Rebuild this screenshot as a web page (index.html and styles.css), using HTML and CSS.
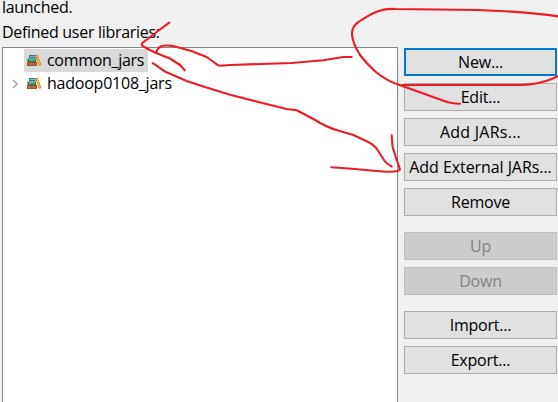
FILE: index.html
```html
<!DOCTYPE html>
<html lang="en">
<head>
<meta charset="utf-8">
<title>User Libraries</title>
<link rel="stylesheet" href="styles.css">
</head>
<body>
<svg class="defs" width="0" height="0" aria-hidden="true">
  <symbol id="books" viewBox="0 0 15 13">
    <path fill="#247a94" d="M2 1h6.500v3H2z"/><path fill="#79bdce" d="M3 2h5v1H3z"/>
    <path fill="#277956" d="M0.500 4.500H9V8H.5z"/><path fill="#9ccbae" d="M2 5.500h6v1H2z"/>
    <path fill="#98512b" d="M0 8h10v4H0z"/><path fill="#c98b57" d="M1 9.500h8v1H1z"/>
    <path fill="#d68a20" d="M8 1.200 10.500.5l4 10.500-2.500 1z"/><path fill="#ffc458" d="m9.300 2 .9-.2 3.200 8.700-.9.300z"/>
  </symbol>
</svg>
<main class="dialog">
  <p class="intro">launched.</p>
  <p class="label">Defined user libraries:</p>
  <div class="content">
    <ul class="list">
      <li class="row"><span class="toggle"></span><span class="item selected"><svg class="books"><use href="#books"/></svg><span class="name-a">common_jars</span></span></li>
      <li class="row"><span class="toggle"><svg width="7" height="10" viewBox="0 0 7 10"><path d="m1 1 4 4-4 4" fill="none" stroke="#a6a6a6" stroke-width="1.5"/></svg></span><span class="item"><svg class="books"><use href="#books"/></svg><span class="name-b">hadoop0108_jars</span></span></li>
    </ul>
    <div class="actions">
      <button class="default">New...</button>
      <button>Edit...</button>
      <button class="jars">Add JARs...</button>
      <button class="wide">Add External JARs...</button>
      <button>Remove</button>
      <button class="group" disabled>Up</button>
      <button disabled>Down</button>
      <button class="group">Import...</button>
      <button>Export...</button>
    </div>
  </div>
</main>
<svg class="ink" viewBox="0 0 558 402" aria-hidden="true">
  <path d="M169.3 22.7 160 29.5 143 42.5Q140.500 44.500 143 46.200L147 48.500 156 53 170 58.500 180 65 184.700 70.300"/>
  <path d="M156.300 52.700Q157.500 46.500 163.300 45.700 170 45.200 175 46.500L192 51.300 206.700 57 215 63Q218 65.800 220 65.700L230 65 291.700 63 323.300 60.300 343.300 57H351.700"/>
  <path d="M152.700 63.300C157 65 160 69 166 72L186.700 81 201.700 86 230 94.700 263.300 103.300 286.700 109 296.700 110.300 313.300 119Q326 127 338 130.500L353.300 135 366.700 141.300Q374 145 376.700 148.700L384.300 160.500Q386.500 164 391.700 166.500"/>
  <path d="M391.700 135.300 392.500 146.500Q394 152 400 169.500L398 171Q391 172.500 380 171.200L351.700 168.700 331.300 167.300"/>
  <path d="M559 16.500Q530 11.700 478 10L395 9Q386 8.500 378 11.200 370 14 358.500 22 352 26 352 34 352 42 360 55 366 63 375 71.200 387 81.500 401.700 85.700L445 101.300Q451 103.700 460 103.700"/>
  <path d="M401.700 85H521.700Q538 84.500 551.700 79L559 75.700"/>
</svg>
</body>
</html>
```

FILE: styles.css
```css
* { box-sizing: border-box; }
body {
  margin: 0;
  height: 402px;
  overflow: hidden;
  background: #f0f0f0;
  color: #000;
  font: 16px/23px "Open Sans", "Noto Sans", sans-serif;
}
.defs { display: none; }
.dialog { height: 402px; padding-left: 2px; overflow: hidden; }
p { margin: 0; white-space: nowrap; }
.intro { height: 21px; line-height: 15px; letter-spacing: -.3px; }
.label { height: 26px; line-height: 23px; letter-spacing: -.3px; }
.content { display: flex; height: 356px; gap: 6px; }
.list {
  width: 396px;
  height: 100%;
  margin: 0;
  padding: 1px 0 0;
  border: 1px solid #828790;
  border-bottom: 0;
  background: #fff;
  list-style: none;
}
.row { display: flex; height: 23px; }
.toggle { display: flex; width: 21px; align-items: center; padding-left: 9px; }
.item { display: flex; align-items: center; width: 148px; white-space: nowrap; }
.selected { width: 124px; background: #d9d9d9; }
.books { flex: none; width: 15px; height: 13px; margin: 0 5px 0 3px; }
.name-a { letter-spacing: -.3px; }
.name-b { letter-spacing: -.23px; }
.actions { display: flex; flex-direction: column; gap: 7px; width: 153px; padding-top: 1px; }
button {
  flex: none;
  width: 153px;
  height: 28px;
  padding: 0;
  border: 1px solid #adadad;
  border-radius: 0;
  background: #e1e1e1;
  color: #000;
  font: inherit;
  line-height: 26px;
  letter-spacing: -.2px;
  white-space: nowrap;
}
.default { border: 2px solid #0078d7; line-height: 24px; }
.jars { letter-spacing: .25px; }
.wide { letter-spacing: -.07px; }
.group { margin-top: 9px; }
button:disabled { background: #ccc; border-color: #bfbfbf; color: #838383; }
.ink {
  position: absolute;
  inset: 0;
  width: 558px;
  height: 402px;
  pointer-events: none;
  fill: none;
  stroke: #ed1c24;
  stroke-width: 2.1;
  stroke-linecap: round;
  stroke-linejoin: round;
}
```
